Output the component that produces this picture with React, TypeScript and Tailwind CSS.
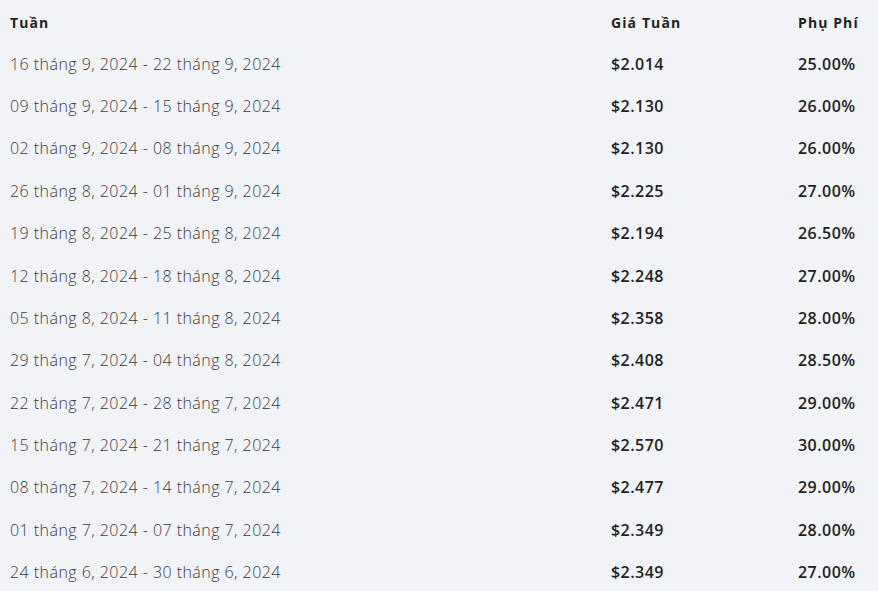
const rows: [string, string, string][] = [
  ['16 tháng 9, 2024 - 22 tháng 9, 2024', '$2.014', '25.00%'],
  ['09 tháng 9, 2024 - 15 tháng 9, 2024', '$2.130', '26.00%'],
  ['02 tháng 9, 2024 - 08 tháng 9, 2024', '$2.130', '26.00%'],
  ['26 tháng 8, 2024 - 01 tháng 9, 2024', '$2.225', '27.00%'],
  ['19 tháng 8, 2024 - 25 tháng 8, 2024', '$2.194', '26.50%'],
  ['12 tháng 8, 2024 - 18 tháng 8, 2024', '$2.248', '27.00%'],
  ['05 tháng 8, 2024 - 11 tháng 8, 2024', '$2.358', '28.00%'],
  ['29 tháng 7, 2024 - 04 tháng 8, 2024', '$2.408', '28.50%'],
  ['22 tháng 7, 2024 - 28 tháng 7, 2024', '$2.471', '29.00%'],
  ['15 tháng 7, 2024 - 21 tháng 7, 2024', '$2.570', '30.00%'],
  ['08 tháng 7, 2024 - 14 tháng 7, 2024', '$2.477', '29.00%'],
  ['01 tháng 7, 2024 - 07 tháng 7, 2024', '$2.349', '28.00%'],
  ['24 tháng 6, 2024 - 30 tháng 6, 2024', '$2.349', '27.00%'],
];

export default function App() {
  return (
    <div className="min-h-[591px] w-[878px] bg-[#f2f3f7] px-[10px] font-['Open_Sans',sans-serif]">
      <div className="grid h-[42.4px] grid-cols-[1fr_187px_70px] items-center pt-[3px] text-[14px] font-bold tracking-[1.1px] text-[#222]">
        <span>Tuần</span>
        <span>Giá Tuần</span>
        <span>Phụ Phí</span>
      </div>
      {rows.map(([week, price, fee]) => (
        <div key={week} className="grid h-[42.4px] grid-cols-[1fr_187px_70px] items-center text-[16px] tracking-[0.45px]">
          <span className="font-light text-[#3a3a3a]">{week}</span>
          <span className="font-semibold text-[#222]">{price}</span>
          <span className="font-semibold text-[#222]">{fee}</span>
        </div>
      ))}
    </div>
  );
}
